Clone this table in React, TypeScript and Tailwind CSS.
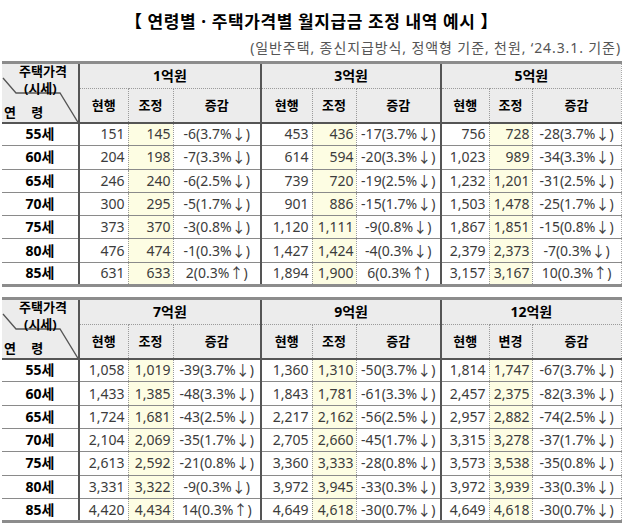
import React from "react";

type Group = { title: string; sub: [string, string, string]; rows: [string, string, string][] };
type Block = { groups: Group[] };

const ages = ["55세", "60세", "65세", "70세", "75세", "80세", "85세"];

const blocks: Block[] = [
  {
    groups: [
      {
        title: "1억원",
        sub: ["현행", "조정", "증감"],
        rows: [
          ["151", "145", "-6(3.7%↓)"],
          ["204", "198", "-7(3.3%↓)"],
          ["246", "240", "-6(2.5%↓)"],
          ["300", "295", "-5(1.7%↓)"],
          ["373", "370", "-3(0.8%↓)"],
          ["476", "474", "-1(0.3%↓)"],
          ["631", "633", "2(0.3%↑)"],
        ],
      },
      {
        title: "3억원",
        sub: ["현행", "조정", "증감"],
        rows: [
          ["453", "436", "-17(3.7%↓)"],
          ["614", "594", "-20(3.3%↓)"],
          ["739", "720", "-19(2.5%↓)"],
          ["901", "886", "-15(1.7%↓)"],
          ["1,120", "1,111", "-9(0.8%↓)"],
          ["1,427", "1,424", "-4(0.3%↓)"],
          ["1,894", "1,900", "6(0.3%↑)"],
        ],
      },
      {
        title: "5억원",
        sub: ["현행", "조정", "증감"],
        rows: [
          ["756", "728", "-28(3.7%↓)"],
          ["1,023", "989", "-34(3.3%↓)"],
          ["1,232", "1,201", "-31(2.5%↓)"],
          ["1,503", "1,478", "-25(1.7%↓)"],
          ["1,867", "1,851", "-15(0.8%↓)"],
          ["2,379", "2,373", "-7(0.3%↓)"],
          ["3,157", "3,167", "10(0.3%↑)"],
        ],
      },
    ],
  },
  {
    groups: [
      {
        title: "7억원",
        sub: ["현행", "조정", "증감"],
        rows: [
          ["1,058", "1,019", "-39(3.7%↓)"],
          ["1,433", "1,385", "-48(3.3%↓)"],
          ["1,724", "1,681", "-43(2.5%↓)"],
          ["2,104", "2,069", "-35(1.7%↓)"],
          ["2,613", "2,592", "-21(0.8%↓)"],
          ["3,331", "3,322", "-9(0.3%↓)"],
          ["4,420", "4,434", "14(0.3%↑)"],
        ],
      },
      {
        title: "9억원",
        sub: ["현행", "조정", "증감"],
        rows: [
          ["1,360", "1,310", "-50(3.7%↓)"],
          ["1,843", "1,781", "-61(3.3%↓)"],
          ["2,217", "2,162", "-56(2.5%↓)"],
          ["2,705", "2,660", "-45(1.7%↓)"],
          ["3,360", "3,333", "-28(0.8%↓)"],
          ["3,972", "3,945", "-33(0.3%↓)"],
          ["4,649", "4,618", "-30(0.7%↓)"],
        ],
      },
      {
        title: "12억원",
        sub: ["현행", "변경", "증감"],
        rows: [
          ["1,814", "1,747", "-67(3.7%↓)"],
          ["2,457", "2,375", "-82(3.3%↓)"],
          ["2,957", "2,882", "-74(2.5%↓)"],
          ["3,315", "3,278", "-37(1.7%↓)"],
          ["3,573", "3,538", "-35(0.8%↓)"],
          ["3,972", "3,939", "-33(0.3%↓)"],
          ["4,649", "4,618", "-30(0.7%↓)"],
        ],
      },
    ],
  },
];

function CornerCell() {
  return (
    <th
      rowSpan={2}
      className="relative border-t-[3px] border-b-2 border-r-2 border-t-[#8c8c8c] border-b-[#555] border-r-[#555] bg-[#ececec] p-0 align-top"
    >
      <svg className="absolute left-0 top-0" width="77" height="60" viewBox="0 0 77 60" fill="none">
        <polyline points="1,14 14,29 58,29 77,60" stroke="#555" strokeWidth="1.3" />
      </svg>
      <div className="relative flex h-[57px] flex-col text-[13px] font-bold leading-none text-black">
        <span className="mt-[1px] pl-[17px] text-left">주택가격</span>
        <span className="mt-[4px] pl-[22px] text-left">(시세)</span>
        <span className="mt-auto mb-[2px] pl-[2px] text-left tracking-[6px]">연 령</span>
      </div>
    </th>
  );
}

function BlockTable({ block }: { block: Block }) {
  return (
    <table className="w-[619px] table-fixed border-collapse">
      <colgroup>
        <col className="w-[77px]" />
        <col className="w-[49px]" />
        <col className="w-[45px]" />
        <col className="w-[88px]" />
        <col className="w-[51px]" />
        <col className="w-[44px]" />
        <col className="w-[85px]" />
        <col className="w-[48px]" />
        <col className="w-[43px]" />
        <col className="w-[89px]" />
      </colgroup>
      <thead>
        <tr className="h-[26px]">
          <CornerCell />
          {block.groups.map((g, gi) => (
            <th
              key={g.title}
              colSpan={3}
              className={
                "border-t-[3px] border-b border-t-[#8c8c8c] border-b-[#9a9a9a] border-dotted bg-[#ececec] p-0 text-[14px] font-bold leading-none text-black " +
                (gi > 0 ? "border-l-2 border-l-[#555] " : "") +
                (gi === 2 ? "border-r border-r-[#aaa]" : "")
              }
              style={{ borderTopStyle: "solid", borderLeftStyle: "solid" }}
            >
              {g.title}
            </th>
          ))}
        </tr>
        <tr className="h-[34px]">
          {block.groups.map((g, gi) =>
            g.sub.map((s, si) => (
              <th
                key={g.title + s}
                className={
                  "border-b-2 border-b-[#555] bg-[#ececec] p-0 text-[13px] font-bold leading-none text-black " +
                  (si === 0 && gi > 0 ? "border-l-2 border-l-[#555] " : "") +
                  (si > 0 ? "border-l border-dotted border-l-[#9a9a9a] " : "") +
                  (gi === 2 && si === 2 ? "border-r border-r-[#aaa]" : "")
                }
                style={{ borderBottomStyle: "solid" }}
              >
                {s}
              </th>
            ))
          )}
        </tr>
      </thead>
      <tbody>
        {ages.map((age, ri) => {
          const last = ri === ages.length - 1;
          const rowBorder = last ? "border-b-[3px] border-b-[#8c8c8c] " : "border-b border-b-[#8a8a8a] ";
          return (
            <tr key={age} className="h-[23.3px]">
              <td
                className={
                  rowBorder +
                  "border-r-2 border-r-[#555] p-0 text-center text-[14px] font-bold leading-none text-black"
                }
              >
                {age}
              </td>
              {block.groups.map((g, gi) =>
                g.rows[ri].map((v, si) => (
                  <td
                    key={g.title + si}
                    className={
                      rowBorder +
                      "p-0 text-[14px] leading-none text-[#3c3c3c] " +
                      (si === 0 ? "pr-[3px] text-right " : "") +
                      (si === 1 ? "bg-[#fdfde3] pr-[2px] text-right " : "") +
                      (si === 2 ? "whitespace-nowrap text-center " : "") +
                      (si === 0 && gi > 0 ? "border-l-2 border-l-[#555] " : "") +
                      (si > 0 ? "border-l border-dotted border-l-[#9a9a9a] " : "") +
                      (gi === 2 && si === 2 ? "border-r border-r-[#aaa]" : "")
                    }
                    style={{ borderBottomStyle: "solid" }}
                  >
                    {v}
                  </td>
                ))
              )}
            </tr>
          );
        })}
      </tbody>
    </table>
  );
}

export default function App() {
  return (
    <div
      className="min-h-screen w-[630px] bg-white pt-[12px] pl-[2px]"
      style={{ fontFamily: '"Noto Sans", "Noto Sans CJK KR", sans-serif' }}
    >
      <div className="w-[619px]">
        <h1 className="text-center text-[17px] font-bold leading-[20px] tracking-[0.6px] text-black">
          【 연령별 · 주택가격별 월지급금 조정 내역 예시 】
        </h1>
        <p className="mt-[8px] text-right text-[14px] leading-[16px] tracking-[0.9px] text-[#555]">
          (일반주택, 종신지급방식, 정액형 기준, 천원, ‘24.3.1. 기준)
        </p>
        <div className="mt-[5px] flex flex-col gap-[10px]">
          {blocks.map((b, i) => (
            <BlockTable key={i} block={b} />
          ))}
        </div>
      </div>
    </div>
  );
}
